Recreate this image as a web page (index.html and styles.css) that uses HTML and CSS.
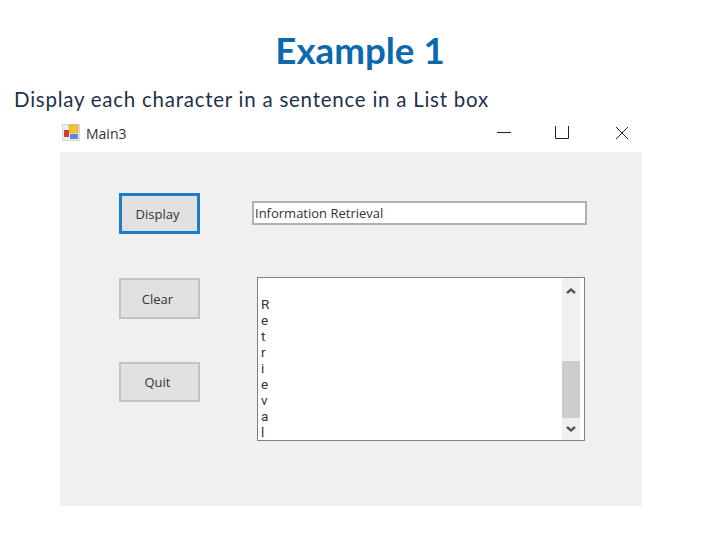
FILE: index.html
```html
<!DOCTYPE html>
<html lang="en">
<head>
    <meta charset="UTF-8">
    <title>Example 1</title>
    <link rel="stylesheet" href="styles.css">
</head>
<body>

    <h1 class="slide-title">Example 1</h1>
    <p class="slide-text">Display each character in a sentence in a List box</p>

    <div class="window">
        <div class="title-bar">
            <svg class="app-icon" width="18" height="17" viewBox="0 0 18 17">
                <rect x="0.5" y="0.5" width="17" height="16" fill="#efefef" stroke="#d4d4d4"/>
                <rect x="2" y="6" width="5" height="7" fill="#d03a32"/>
                <rect x="7" y="1" width="9" height="8" fill="#f2c230" stroke="#c89a20" stroke-width="0.5"/>
                <rect x="8" y="10" width="8" height="5" fill="#5a86d6"/>
            </svg>
            <span class="window-name">Main3</span>
            <div class="window-controls">
                <svg width="14" height="14" viewBox="0 0 14 14"><path d="M0 6.5H14" stroke="#222" fill="none"/></svg>
                <svg width="14" height="14" viewBox="0 0 14 14"><path d="M0.5 0V12.5H13.5V0" stroke="#222" fill="none"/></svg>
                <svg width="14" height="14" viewBox="0 0 14 14"><path d="M1 1L13 13M13 1L1 13" stroke="#222" fill="none"/></svg>
            </div>
        </div>

        <div class="form-area">
            <div class="buttons">
                <button class="btn btn-focus">Display</button>
                <button class="btn">Clear</button>
                <button class="btn btn-quit">Quit</button>
            </div>
            <div class="fields">
                <div class="text-box">Information Retrieval</div>
                <div class="list-box">
                    <ul class="list-items">
                        <li>R</li>
                        <li>e</li>
                        <li>t</li>
                        <li>r</li>
                        <li>i</li>
                        <li>e</li>
                        <li>v</li>
                        <li>a</li>
                        <li>l</li>
                    </ul>
                    <div class="scrollbar">
                        <svg class="arrow" width="12" height="8" viewBox="0 0 12 8"><path d="M2 6L6 2.5L10 6" stroke="#555" stroke-width="2.4" fill="none"/></svg>
                        <div class="thumb"></div>
                        <svg class="arrow" width="12" height="8" viewBox="0 0 12 8"><path d="M2 2L6 5.5L10 2" stroke="#555" stroke-width="2.4" fill="none"/></svg>
                    </div>
                </div>
            </div>
        </div>
    </div>

</body>
</html>
```

FILE: styles.css
```css
body {
    margin: 0;
    background: #fff;
    width: 720px;
    height: 540px;
    overflow: hidden;
    font-family: "Open Sans", sans-serif;
}
.slide-title {
    margin: 0;
    padding-top: 29px;
    height: 43px;
    line-height: 43px;
    text-align: center;
    font-family: "Lato", sans-serif;
    font-size: 36.7px;
    font-weight: bold;
    color: #0b6aae;
}
.slide-text {
    margin: 0;
    padding: 14px 0 0 14px;
    height: 27px;
    line-height: 27px;
    font-family: "Lato", sans-serif;
    font-size: 20.5px;
    letter-spacing: 0.75px;
    color: #1f3049;
}
.window {
    margin: 7px 0 0 60px;
    width: 582px;
}
.title-bar {
    display: flex;
    align-items: center;
    height: 26px;
    margin-bottom: 6px;
    padding-left: 2px;
}
.app-icon {
    margin-right: 6px;
    margin-top: -2px;
}
.window-name {
    font-size: 14px;
    color: #333;
}
.window-controls {
    margin-left: auto;
    display: flex;
    gap: 44px;
    padding-right: 13px;
}
.window-controls svg:last-child {
    margin-left: 2px;
}
.form-area {
    background: #f0f0f0;
    height: 354px;
    display: flex;
    padding-left: 59px;
    box-sizing: border-box;
}
.buttons {
    width: 81px;
    padding-top: 41px;
    display: flex;
    flex-direction: column;
}
.btn {
    width: 81px;
    height: 41px;
    box-sizing: border-box;
    background: #e1e1e1;
    border: 2px solid #c2c2c2;
    font-family: "Open Sans", sans-serif;
    font-size: 13px;
    color: #333;
    padding: 0 4px 0 0;
    margin-bottom: 44px;
}
.btn-focus {
    border: 3px solid #1c7ccc;
}
.btn-quit {
    height: 40px;
    margin-top: -1px;
}
.fields {
    margin-left: 52px;
    padding-top: 49px;
}
.text-box {
    width: 335px;
    height: 24px;
    box-sizing: border-box;
    background: #fff;
    border: 2px solid #b0b0b0;
    font-size: 13px;
    line-height: 20px;
    padding-left: 1px;
    color: #333;
}
.list-box {
    margin: 52px 0 0 5px;
    width: 328px;
    height: 164px;
    box-sizing: border-box;
    background: #fff;
    border: 1px solid #808080;
    display: flex;
    overflow: hidden;
}
.list-items {
    list-style: none;
    margin: 0;
    padding: 18px 0 0 3px;
    flex: 1;
    font-family: "Roboto", sans-serif;
    font-size: 13.5px;
    line-height: 16px;
    color: #333;
}
.scrollbar {
    width: 18px;
    margin-right: 4px;
    background: #f0f0f0;
    display: flex;
    flex-direction: column;
    align-items: center;
}
.arrow {
    margin-top: 9px;
    flex: none;
}
.thumb {
    width: 18px;
    height: 57px;
    margin-top: 66px;
    background: #cdcdcd;
}
.thumb + .arrow {
    margin-top: 7px;
}
```
